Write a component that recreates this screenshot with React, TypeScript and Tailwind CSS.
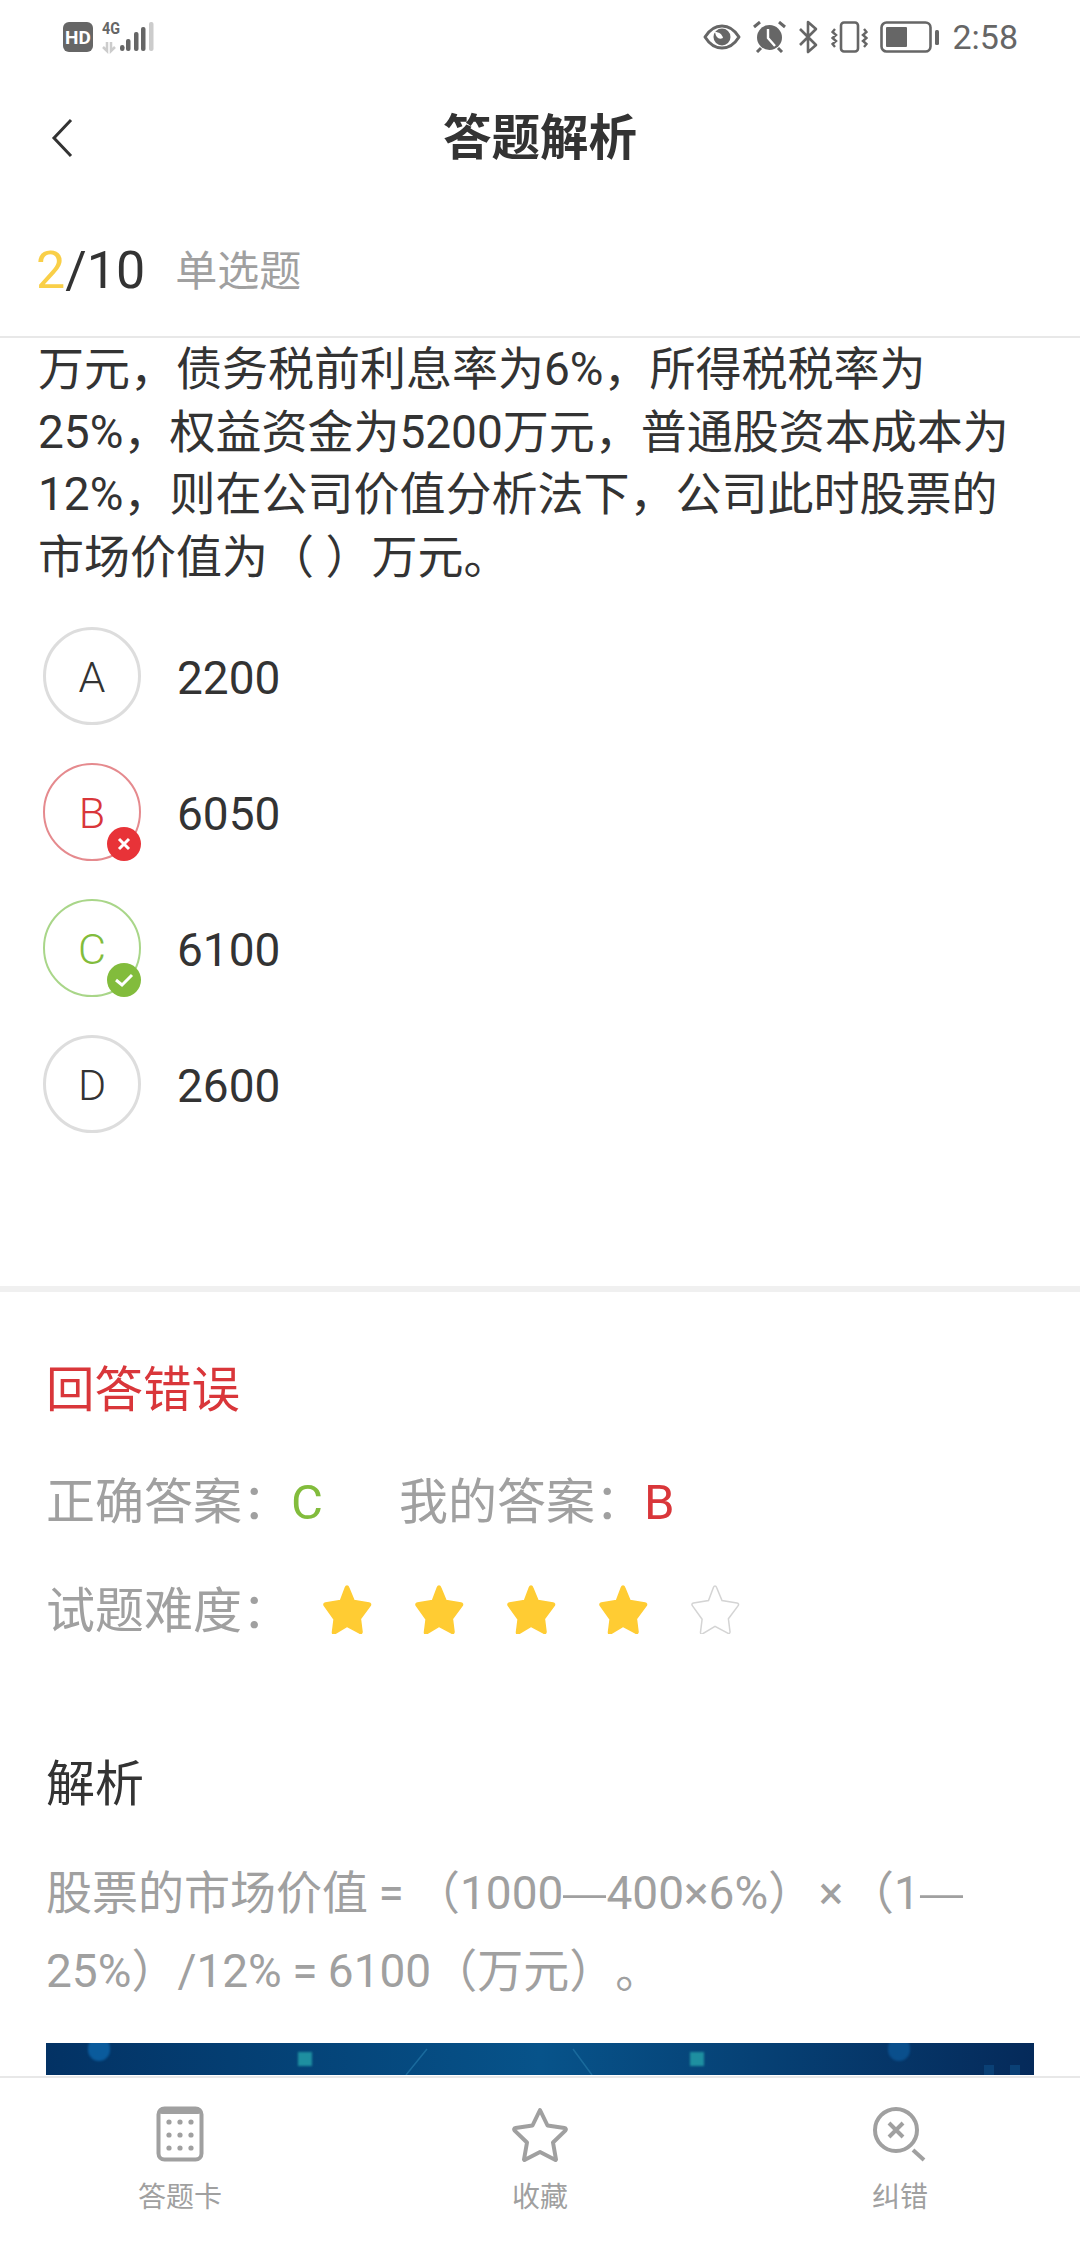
const font = "font-['Roboto','Noto_Sans_CJK_SC','Noto_Sans',sans-serif]"

const SignalIcons = () => (
  <svg width="96" height="36" viewBox="0 0 96 36" className="block">
    <rect x="1" y="3" width="30" height="30" rx="6" fill="#666" />
    <text x="16" y="25" textAnchor="middle" fontSize="19" fontWeight="700" fill="#fff" fontFamily="Roboto, sans-serif">HD</text>
    <text x="40" y="15" fontSize="16" fontWeight="700" fill="#666" fontFamily="Roboto, sans-serif" textLength="18" lengthAdjust="spacingAndGlyphs">4G</text>
    <path d="M45 23v9l-4-4M49 23v9l4-4" stroke="#ccc" strokeWidth="2.500" fill="none" />
    <rect x="58" y="26" width="4.500" height="6" rx="2.200" fill="#666" />
    <rect x="64" y="20" width="4.500" height="12" rx="2" fill="#666" />
    <rect x="72" y="13" width="4.500" height="19" rx="2" fill="#666" />
    <rect x="79" y="8" width="4.500" height="24" rx="2" fill="#666" />
    <rect x="87" y="3" width="4.500" height="29" rx="2" fill="#ccc" />
  </svg>
)

const EyeIcon = () => (
  <svg width="38" height="26" viewBox="0 0 38 26">
    <path d="M2 13C7 5 12 2 19 2s12 3 17 11c-5 8-10 11-17 11S7 21 2 13Z" fill="none" stroke="#666" strokeWidth="3" strokeLinejoin="round" />
    <circle cx="19" cy="13" r="8.500" fill="#666" />
    <path d="M12 8c4 0 7 2 8 6-4 2-7 0-8-6Z" fill="#fff" />
  </svg>
)

const AlarmIcon = () => (
  <svg width="33" height="32" viewBox="0 0 33 32">
    <circle cx="16.500" cy="16.500" r="12.500" fill="#666" />
    <path d="M15 8v9l7 8" fill="none" stroke="#fff" strokeWidth="2.400" />
    <path d="M1 6l6-5M32 6l-6-5M4 31l4-4M29 31l-4-4" stroke="#666" strokeWidth="3" />
  </svg>
)

const BluetoothIcon = () => (
  <svg width="21" height="34" viewBox="0 0 21 34">
    <path d="M2 9l16 16-8 7V2l8 7L2 25" fill="none" stroke="#666" strokeWidth="2.600" strokeLinejoin="round" />
  </svg>
)

const VibrateIcon = () => (
  <svg width="37" height="32" viewBox="0 0 37 32">
    <rect x="10" y="1.500" width="17" height="29" rx="3" fill="none" stroke="#666" strokeWidth="2.600" />
    <path d="M4 8 1.500 11 5 14l-3.500 3L5 20l-3.500 3L4 26M33 8l2.500 3-3.500 3 3.500 3-3.500 3 3.500 3-2.500 3" fill="none" stroke="#666" strokeWidth="2.400" />
  </svg>
)

const BatteryIcon = () => (
  <svg width="60" height="32" viewBox="0 0 60 32">
    <rect x="1.500" y="1.500" width="49" height="29" rx="5" fill="none" stroke="#666" strokeWidth="2.600" />
    <rect x="6" y="6" width="21" height="20" rx="1" fill="#666" />
    <rect x="55" y="9" width="4" height="15" rx="1.500" fill="#666" />
  </svg>
)

const BackIcon = () => (
  <svg width="24" height="40" viewBox="0 0 24 40">
    <path d="M21 2 4 20l17 18" fill="none" stroke="#333" strokeWidth="3" />
  </svg>
)

const StarIcon = ({ filled }: { filled: boolean }) => (
  <svg width="52" height="50" viewBox="0 0 52 50">
    <path
      d="M26 2c.8 0 1.200.5 1.500 1.300l5.500 13.200 15 2.500c1.600.3 2 1.600 1 2.900l-9.600 12.900 1.600 12.900c.2 1.600-1 2.400-2.300 1.500L26 42.300 13.800 49.700c-1.300.9-2.500.1-2.300-1.500l1.600-12.900L3.500 21.900c-1-1.300-.6-2.600 1-2.900l15-2.500L24.500 3.300C24.800 2.500 25.200 2 26 2Z"
      fill={filled ? "#ffcc33" : "#fff"}
      stroke={filled ? "#ffcc33" : "#d4d4d4"}
      strokeWidth="1.500"
    />
  </svg>
)

const CardIcon = () => (
  <svg width="48" height="56" viewBox="0 0 48 56">
    <rect x="2.500" y="2.500" width="43" height="51" rx="6" fill="none" stroke="#a0a0a0" strokeWidth="4" />
    <rect x="3" y="2" width="42" height="6" rx="3" fill="#a0a0a0" />
    {[16, 29, 42].map((y) =>
      [13, 24, 35].map((x) => <circle key={`${x}-${y}`} cx={x} cy={y} r="2.600" fill="#a0a0a0" />),
    )}
  </svg>
)

const TabStarIcon = () => (
  <svg width="58" height="56" viewBox="0 0 58 56">
    <path
      d="M29 4l7.500 15.500 17 2.500c1.500.2 1.800 1.500.8 2.600L42 36.500l3 17-.5.500L29 46l-15.500 8-.5-.5 3-17L3.700 24.600c-1-1.100-.7-2.400.8-2.600l17-2.500L29 4Z"
      fill="none"
      stroke="#a0a0a0"
      strokeWidth="4"
      strokeLinejoin="round"
    />
  </svg>
)

const FixIcon = () => (
  <svg width="56" height="56" viewBox="0 0 56 56">
    <circle cx="24" cy="24" r="21" fill="none" stroke="#a0a0a0" strokeWidth="4" />
    <path d="M17 17l14 14M31 17 17 31" stroke="#a0a0a0" strokeWidth="4" />
    <path d="M41 44l11 10" stroke="#a0a0a0" strokeWidth="4" />
  </svg>
)

const options = [
  { key: "A", value: "2200", state: "none" },
  { key: "B", value: "6050", state: "wrong" },
  { key: "C", value: "6100", state: "right" },
  { key: "D", value: "2600", state: "none" },
]

const OptionRow = ({ letter, value, state }: { letter: string; value: string; state: string }) => {
  const circle =
    state === "wrong"
      ? "border-[2px] border-[#e58a8e] text-[#d9363a]"
      : state === "right"
        ? "border-[2px] border-[#a9d689] text-[#82bc3c]"
        : "border-[3px] border-[#dddddd] text-[#333333]"

  return (
    <div className="flex h-[136px] items-center pl-[43px]">
      <div className={`relative flex h-[98px] w-[98px] items-center justify-center rounded-full pt-[3px] text-[43px] font-light ${circle}`}>
        {letter}
        {state === "wrong" && (
          <div className="absolute bottom-[-2px] right-[-2px] flex h-[34px] w-[34px] items-center justify-center rounded-full bg-[#e83338]">
            <svg width="14" height="14" viewBox="0 0 14 14">
              <path d="M2 2l10 10M12 2 2 12" stroke="#fff" strokeWidth="3" />
            </svg>
          </div>
        )}
        {state === "right" && (
          <div className="absolute bottom-[-2px] right-[-2px] flex h-[34px] w-[34px] items-center justify-center rounded-full bg-[#82bc3c]">
            <svg width="20" height="16" viewBox="0 0 20 16">
              <path d="M2 8l6 5L18 3" fill="none" stroke="#fff" strokeWidth="3" />
            </svg>
          </div>
        )}
      </div>
      <span className="ml-[36px] mt-[4px] text-[46px] text-[#333333]">{value}</span>
    </div>
  )
}

const TabItem = ({ icon, label }: { icon: React.ReactNode; label: string }) => (
  <div className="flex flex-col items-center">
    <div className="flex h-[64px] items-center">{icon}</div>
    <span className="mt-[12px] text-[28px] leading-[40px] text-[#a0a0a0]">{label}</span>
  </div>
)

const Wide = ({ children }: { children: string }) => (
  <span className="inline-block w-[1em] text-center">{children}</span>
)

const Dash = () => (
  <span className="inline-block w-[43px] scale-x-[1.25] text-center font-['Noto_Sans_CJK_SC'] text-[43px] leading-none">—</span>
)

export default function App() {
  return (
    <div className={`flex h-[2244px] w-[1080px] flex-col overflow-hidden bg-white [text-spacing-trim:space-all] ${font}`}>
      {/* Status bar */}
      <div className="flex h-[72px] shrink-0 items-center justify-between pl-[62px] pr-[62px] pt-[2px]">
        <SignalIcons />
        <div className="flex items-center gap-[12px]">
          <EyeIcon />
          <AlarmIcon />
          <BluetoothIcon />
          <VibrateIcon />
          <BatteryIcon />
          <span className="text-[34px] leading-none text-[#666666]">2:58</span>
        </div>
      </div>

      {/* Title bar */}
      <div className="relative flex h-[134px] shrink-0 items-center justify-center">
        <div className="absolute left-[50px] top-[46px]">
          <BackIcon />
        </div>
        <h1 className="text-[48.500px] font-bold text-[#333333]">答题解析</h1>
      </div>

      {/* Question counter */}
      <div className="flex h-[132px] shrink-0 items-center border-b-2 border-[#e8e8e8] pl-[36px]">
        <span className="text-[52px] text-[#f9cf48]">2</span>
        <span className="text-[52px] text-[#333333]">/10</span>
        <span className="ml-[30px] text-[42px] text-[#a0a0a0]">单选题</span>
      </div>

      {/* Question */}
      <div className="h-[948px] shrink-0 overflow-hidden">
        <p className="px-[38px] text-[46px] leading-[62.500px] text-[#333333]">
          万元，债务税前利息率为6%，所得税税率为
          <br />
          25%，权益资金为5200万元，普通股资本成本为
          <br />
          12%，则在公司价值分析法下，公司此时股票的
          <br />
          市场价值为（ ）万元。
        </p>
        <div className="mt-[20px]">
          {options.map((o) => (
            <OptionRow key={o.key} letter={o.key} value={o.value} state={o.state} />
          ))}
        </div>
      </div>

      <div className="h-[6px] shrink-0 bg-[#f0f0f0]" />

      {/* Analysis */}
      <div className="min-h-0 flex-1 overflow-hidden px-[46px]">
        <div className="mt-[64px] text-[48.500px] leading-[70px] text-[#d9363a]">回答错误</div>
        <div className="mt-[42px] flex h-[70px] items-center text-[49px] text-[#a0a0a0]">
          <span>正确答案：</span>
          <span className="text-[#82bc3c]">C</span>
          <span className="ml-[76px]">我的答案：</span>
          <span className="text-[#d9363a]">B</span>
        </div>
        <div className="mt-[36px] flex h-[70px] items-center text-[49px] text-[#a0a0a0]">
          <span className="mt-[6px] w-[275px]">试题难度：</span>
          <div className="flex gap-[40px]">
            <StarIcon filled />
            <StarIcon filled />
            <StarIcon filled />
            <StarIcon filled />
            <StarIcon filled={false} />
          </div>
        </div>
        <div className="mt-[106px] text-[49px] leading-[70px] text-[#333333]">解析</div>
        <p className="mt-[35px] text-[46px] leading-[77.500px] text-[#a0a0a0]">
          股票的市场价值<Wide>=</Wide>（1000<Dash />400×6%）<span className="inline-block w-[34px] text-center">×</span>（1<Dash />
          <br />
          25%）/12%<Wide>=</Wide>6100（万元）。
        </p>
        {/* Cropped article picture */}
        <div className="relative mt-[33px] h-[32px] overflow-hidden bg-gradient-to-r from-[#033264] via-[#07538a] to-[#052a5a]">
          <div className="absolute left-[42px] top-[-6px] h-[24px] w-[22px] rounded-full bg-[#0a5b9c] blur-[1px]" />
          <div className="absolute left-[252px] top-[9px] h-[14px] w-[14px] bg-[#1e8fa0] blur-[1px]" />
          <div className="absolute left-[644px] top-[9px] h-[14px] w-[14px] bg-[#1e8fa0] blur-[1px]" />
          <div className="absolute left-[842px] top-[-6px] h-[24px] w-[22px] rounded-full bg-[#0a4f8c] blur-[1px]" />
          <svg width="988" height="32" viewBox="0 0 988 32" className="absolute left-0 top-0">
            <path d="M360 32 381 6M546 32 527 6" stroke="#1a6a9c" strokeWidth="1.500" fill="none" />
            <rect x="938" y="22" width="10" height="10" fill="#0a4075" />
            <rect x="964" y="22" width="10" height="10" fill="#0a4075" />
          </svg>
        </div>
      </div>

      {/* Bottom tabs */}
      <div className="grid h-[168px] shrink-0 grid-cols-3 border-t-2 border-[#e8e8e8] pt-[24px]">
        <TabItem icon={<CardIcon />} label="答题卡" />
        <TabItem icon={<TabStarIcon />} label="收藏" />
        <TabItem icon={<FixIcon />} label="纠错" />
      </div>
    </div>
  )
}
